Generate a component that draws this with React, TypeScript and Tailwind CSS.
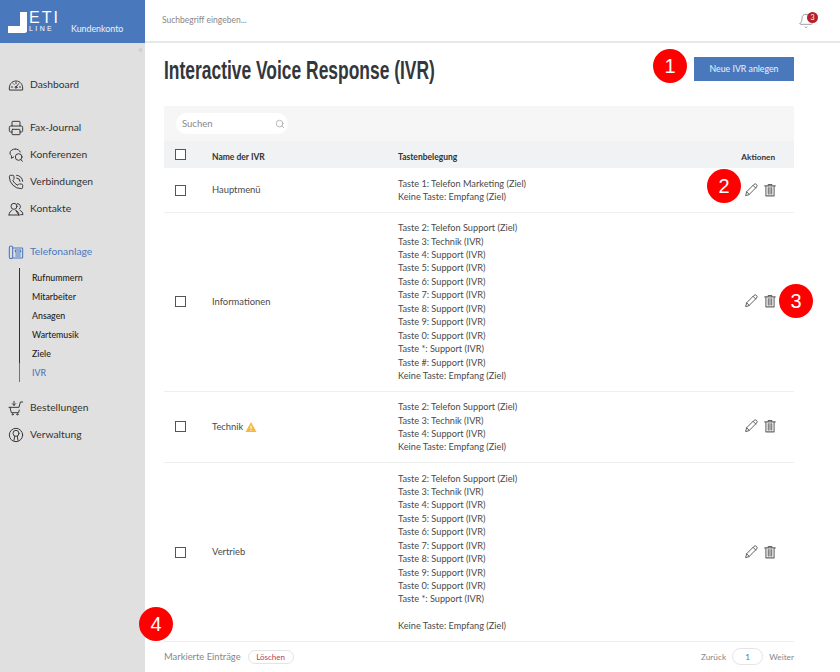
import { Bell, Printer, PhoneCall, Search } from 'lucide-react';
import type { ReactNode } from 'react';

const Ico = ({ children }: { children: ReactNode }) => (
  <svg viewBox="0 0 24 24" className="w-[16px] h-[16px] shrink-0" fill="none" stroke="#3a3a3a" strokeWidth="1.5" strokeLinecap="round" strokeLinejoin="round">
    {children}
  </svg>
);

const GaugeIcon = () => (
  <Ico>
    <path d="M2 19c-1-8 4-13 10-13s11 5 10 13z" />
    <path d="M12 15l4-5M5 15h2M17 15h2M8 10l1 1M12 8v2" />
    <circle cx="12" cy="15.5" r="1.4" />
  </Ico>
);
const ChatIcon = () => (
  <Ico>
    <path d="M11 3c-4.500 0-8 2.500-8 6 0 2 1 3.500 2.500 4.500L5 17l3.500-2" />
    <path d="M11 3c3.500 0 6.500 1.800 7.500 4.500" />
    <circle cx="16" cy="15" r="5" />
    <path d="M19.500 19l2 2.500" />
  </Ico>
);
const PeopleIcon = () => (
  <Ico>
    <circle cx="9" cy="8" r="4.500" />
    <path d="M1.500 21c0-4 3-6.500 4.500-7M12 14c1.500.5 4.500 3 4.500 7z M1.500 21h15" />
    <path d="M14 4a4.500 4.500 0 0 1 3 8M18 14c2 1 4.500 3 4.500 6.500H19" />
  </Ico>
);
const DeskPhoneIcon = () => (
  <svg viewBox="0 0 24 24" className="w-[16px] h-[16px] shrink-0" fill="none" stroke="#4a78bd" strokeWidth="1.6" strokeLinejoin="round">
    <rect x="2" y="3" width="5" height="19" rx="2.500" />
    <path d="M7 6h14a1 1 0 0 1 1 1v13a1 1 0 0 1-1 1H7" />
    <rect x="11" y="9" width="8" height="3" />
    <path d="M11 15h8M11 18h8" />
  </svg>
);
const CartIcon = () => (
  <Ico>
    <path d="M1.500 11h15l2-8h3.500M3 11l2 8h11l.8-4" />
    <circle cx="7" cy="21.500" r="1" />
    <circle cx="14" cy="21.500" r="1" />
    <path d="M9 2v6M6.500 5.500L9 8l2.500-2.500" />
  </Ico>
);
const UserRingIcon = () => (
  <Ico>
    <circle cx="12" cy="12" r="10" />
    <circle cx="12" cy="9.500" r="4.500" />
    <path d="M10 14l-1 6M14 14l1 6" />
  </Ico>
);
const PencilIcon = () => (
  <svg viewBox="0 0 24 24" className="w-[14px] h-[14px]" fill="none" stroke="#555" strokeWidth="1.6" strokeLinejoin="round" strokeLinecap="round">
    <path d="M3 21l1.500-6L17 2.500a2.500 2.500 0 0 1 4.500 4.500L9 19.500z" />
    <path d="M4.500 15L9 19.500M15.500 4l4.500 4.500" />
  </svg>
);
const TrashIcon = () => (
  <svg viewBox="0 0 24 24" className="w-[14px] h-[14px]" fill="none" stroke="#666" strokeWidth="1.9" strokeLinejoin="round" strokeLinecap="round">
    <path d="M3 5h18M9 5V2.500h6V5M5 5v17h14V5" />
    <path d="M9 8v11M12 8v11M15 8v11" />
  </svg>
);

const Marker = ({ n, className }: { n: number; className: string }) => (
  <div className={`absolute w-[34px] h-[34px] rounded-full bg-[#fe0000] text-white flex items-center justify-center text-[20px] font-['Liberation_Sans',sans-serif] ${className}`}>
    {n}
  </div>
);

const NavItem = ({ icon, label, className = '' }: { icon: ReactNode; label: string; className?: string }) => (
  <div className={`flex items-center h-[27px] pl-[8px] gap-[6px] text-[10.3px] text-[#333] ${className}`}>
    {icon}
    <span>{label}</span>
  </div>
);

const subItems = ['Rufnummern', 'Mitarbeiter', 'Ansagen', 'Wartemusik', 'Ziele', 'IVR'];

const Checkbox = () => <div className="w-[11px] h-[11px] border border-[#555] bg-white" />;

const support = (keys: string[]) => keys.map((k) => `Taste ${k}: Support (IVR)`);

const rows: { name: string; warn?: boolean; lines: string[] }[] = [
  { name: 'Hauptmenü', lines: ['Taste 1: Telefon Marketing (Ziel)', 'Keine Taste: Empfang (Ziel)'] },
  {
    name: 'Informationen',
    lines: [
      'Taste 2: Telefon Support (Ziel)',
      'Taste 3: Technik (IVR)',
      ...support(['4', '5', '6', '7', '8', '9', '0', '*', '#']),
      'Keine Taste: Empfang (Ziel)',
    ],
  },
  {
    name: 'Technik',
    warn: true,
    lines: ['Taste 2: Telefon Support (Ziel)', 'Taste 3: Technik (IVR)', 'Taste 4: Support (IVR)', 'Keine Taste: Empfang (Ziel)'],
  },
  {
    name: 'Vertrieb',
    lines: [
      'Taste 2: Telefon Support (Ziel)',
      'Taste 3: Technik (IVR)',
      ...support(['4', '5', '6', '7', '8', '9', '0', '*']),
      '',
      'Keine Taste: Empfang (Ziel)',
    ],
  },
];

const App = () => {
  return (
    <div className="relative flex w-[840px] h-[672px] overflow-hidden bg-white font-['Lato',sans-serif]">
      {/* Sidebar */}
      <aside className="w-[145px] shrink-0 bg-[#e0e0e0] flex flex-col">
        <div className="relative h-[43px] bg-[#4a78bd] flex items-center pl-[8px] text-white">
          <div className="relative w-[19px] h-[21px] mt-[1px] shrink-0">
            <div className="absolute right-0 top-0 w-[7px] h-[21px] bg-white rounded-br-[3px]" />
            <div className="absolute left-0 bottom-0 w-[19px] h-[7px] bg-white rounded-br-[3px]" />
          </div>
          <div className="flex flex-col w-[35px] ml-[2px] mt-[1px] font-['Liberation_Sans',sans-serif]">
            <span className="text-[16px] leading-[13px] tracking-[2px]">ETI</span>
            <span className="text-[7px] leading-[8px] tracking-[2.4px] mt-[1px]">LINE</span>
          </div>
          <span className="text-[8.85px] ml-[7px] mt-[15px] text-white/90">Kundenkonto</span>
        </div>
        <div className="flex justify-end pr-[3px] pt-[4px] h-[28px]">
          <div className="w-0 h-0 border-y-[3px] border-y-transparent border-r-[4px] border-r-[#cfcfcf]" />
        </div>
        <NavItem icon={<GaugeIcon />} label="Dashboard" />
        <div className="h-[16px]" />
        <NavItem icon={<Printer size={16} strokeWidth={1.5} color="#3a3a3a" />} label="Fax-Journal" />
        <NavItem icon={<ChatIcon />} label="Konferenzen" />
        <NavItem icon={<PhoneCall size={16} strokeWidth={1.5} color="#3a3a3a" />} label="Verbindungen" />
        <NavItem icon={<PeopleIcon />} label="Kontakte" />
        <div className="h-[16px]" />
        <NavItem icon={<DeskPhoneIcon />} label="Telefonanlage" className="!text-[#4a78bd]" />
        <div className="ml-[19px] mt-[3px] mb-[12px] flex flex-col">
          {subItems.map((s) => (
            <div
              key={s}
              className={`h-[19px] flex items-center pl-[12px] text-[8.8px] font-medium border-l ${
                s === 'IVR' ? 'border-[#4a78bd] text-[#4a78bd]' : 'border-[#333] text-[#222]'
              }`}
            >
              {s}
            </div>
          ))}
        </div>
        <NavItem icon={<CartIcon />} label="Bestellungen" />
        <NavItem icon={<UserRingIcon />} label="Verwaltung" />
      </aside>

      {/* Main */}
      <div className="flex-1 flex flex-col min-w-0">
        <header className="h-[43px] shrink-0 flex items-center justify-between pl-[17px] pr-[26px] border-b-2 border-[#e6e8ea]">
          <span className="text-[8.5px] text-[#888]">Suchbegriff eingeben...</span>
          <div className="relative mt-[1px]">
            <Bell size={16} strokeWidth={1.2} color="#888" />
            <span className="absolute -top-[1px] -right-[4px] w-[11px] h-[11px] rounded-full bg-[#b5202a] text-white text-[7px] leading-[11px] text-center">
              3
            </span>
          </div>
        </header>

        <div className="flex-1 pl-[19px] pr-[46px] flex flex-col min-h-0">
          <div className="flex items-start justify-between h-[63px] pt-[12px]">
            <h1 className="text-[25px] leading-[30px] font-bold text-[#33373b] whitespace-nowrap w-[271px] origin-left scale-x-[0.697] font-['Liberation_Sans',sans-serif]">
              Interactive Voice Response (IVR)
            </h1>
            <button className="w-[100px] h-[24px] mt-[2px] bg-[#4a78bd] text-white/90 text-[8.75px]">Neue IVR anlegen</button>
          </div>

          <div className="h-[35px] bg-[#f6f6f6] flex items-center pl-[12px]">
            <div className="w-[112px] h-[21px] bg-white rounded-full flex items-center justify-between pl-[6px] pr-[3px]">
              <span className="text-[9.5px] text-[#888] mt-[1px]">Suchen</span>
              <Search size={10} color="#aaa" className="mt-[1px]" />
            </div>
          </div>

          <div className="h-[27px] bg-[#f1f2f3] grid grid-cols-[48px_186px_1fr_auto] items-center text-[8.5px] font-bold text-[#333]">
            <div className="pl-[11px]">
              <Checkbox />
            </div>
            <span className="pt-[6px]">Name der IVR</span>
            <span className="pt-[6px]">Tastenbelegung</span>
            <span className="pt-[6px] pr-[19px] text-[8.2px]">Aktionen</span>
          </div>

          {rows.map((row) => (
            <div key={row.name} className="grid grid-cols-[48px_186px_1fr_auto] items-center border-b border-[#eeeeee] pt-[8.6px] pb-[8.1px]">
              <div className="pl-[11px]">
                <Checkbox />
              </div>
              <div className="flex items-center gap-[2px] text-[9.4px] text-[#4a4a4a]">
                <span>{row.name}</span>
                {row.warn && (
                  <svg viewBox="0 0 24 24" className="w-[12px] h-[12px]">
                    <path d="M12 2L23 22H1z" fill="#f5b93f" />
                    <path d="M12 9v7M12 18v2" stroke="#fff" strokeWidth="2" />
                  </svg>
                )}
              </div>
              <div className="text-[9.2px] leading-[13.45px] text-[#4a4a4a]">
                {row.lines.map((line, i) => (
                  <div key={i} className="h-[13.45px]">
                    {line}
                  </div>
                ))}
              </div>
              <div className="flex items-center gap-[5px] pr-[17px] -mt-[1px]">
                <PencilIcon />
                <TrashIcon />
              </div>
            </div>
          ))}

          <div className="flex items-center justify-between h-[30px] text-[9.4px] text-[#888]">
            <div className="flex items-center gap-[7px]">
              <span>Markierte Einträge</span>
              <span className="h-[14px] w-[46px] rounded-full border border-[#e4e4e4] flex items-center justify-center text-[8px] text-[#b5405f]">
                Löschen
              </span>
            </div>
            <div className="flex items-center gap-[6px] text-[8.3px]">
              <span>Zurück</span>
              <span className="w-[31px] h-[17px] rounded-full border border-[#e4e4e4] flex items-center justify-center text-[#4a78bd]">1</span>
              <span>Weiter</span>
            </div>
          </div>
        </div>
      </div>

      <Marker n={1} className="left-[653px] top-[49px]" />
      <Marker n={2} className="left-[707px] top-[169px]" />
      <Marker n={3} className="left-[779px] top-[284px]" />
      <Marker n={4} className="left-[139px] top-[607px]" />
    </div>
  );
};

export default App;
